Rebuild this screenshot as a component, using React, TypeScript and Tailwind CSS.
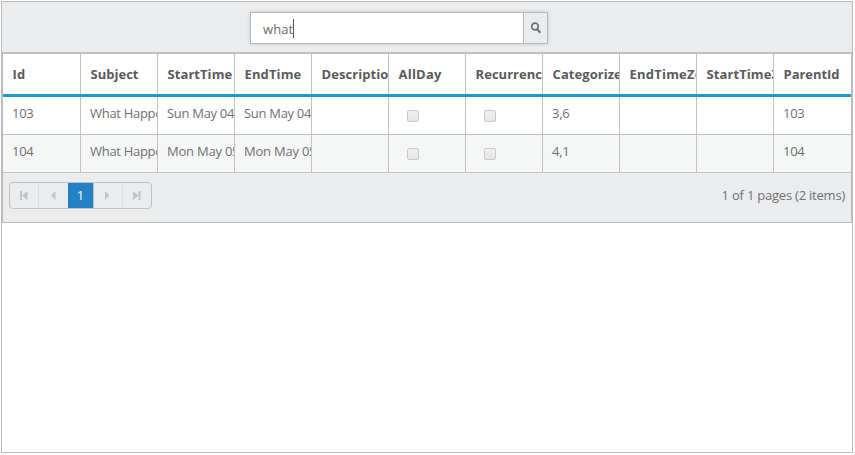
import type { ReactNode } from 'react';

type Row = {
  id: string;
  subject: string;
  start: string;
  end: string;
  categorize: string;
  parentId: string;
  dateTrack: string;
};

const headers = [
  { label: 'Id', track: 'tracking-normal' },
  { label: 'Subject', track: 'tracking-normal' },
  { label: 'StartTime', track: 'tracking-[0.05px]' },
  { label: 'EndTime', track: 'tracking-[0.1px]' },
  { label: 'Description', track: 'tracking-[0.05px]' },
  { label: 'AllDay', track: 'tracking-[0.2px]' },
  { label: 'Recurrence', track: 'tracking-[0.02px]' },
  { label: 'Categorize', track: 'tracking-[0.05px]' },
  { label: 'EndTimeZone', track: 'tracking-[0.2px]' },
  { label: 'StartTimeZone', track: 'tracking-[0.08px]' },
  { label: 'ParentId', track: 'tracking-[-0.05px]' },
];

const rows: Row[] = [
  { id: '103', subject: 'What Happened', start: 'Sun May 04 2014', end: 'Sun May 04 2014', categorize: '3,6', parentId: '103', dateTrack: 'tracking-[-0.3px]' },
  { id: '104', subject: 'What Happened', start: 'Mon May 05 2014', end: 'Mon May 05 2014', categorize: '4,1', parentId: '104', dateTrack: 'tracking-[-0.22px]' },
];

const columns = 'grid grid-cols-[78px_repeat(10,77px)]';

function Check() {
  return (
    <span className="mt-[13px] ml-[9px] block size-3 rounded-[2px] border border-[#c9c9c9] bg-linear-to-b from-[#f0f0f0] to-[#e6e6e6]" />
  );
}

function Cell({ children }: { children?: ReactNode }) {
  return (
    <div className="h-full overflow-hidden border-r border-[#c1c1c1] pl-[9px] whitespace-nowrap last:border-r-0">
      {children}
    </div>
  );
}

function Text({ children, track = 'tracking-[-0.3px]' }: { children: ReactNode; track?: string }) {
  return <span className={`block pt-[6px] text-[13px] leading-5 text-[#707070] ${track}`}>{children}</span>;
}

function DataRow({ row, alt }: { row: Row; alt: boolean }) {
  return (
    <div className={`${columns} h-[38px] border-b border-[#c1c1c1] ${alt ? 'bg-[#f5f7f6]' : 'bg-white'}`}>
      <Cell><Text>{row.id}</Text></Cell>
      <Cell><Text>{row.subject}</Text></Cell>
      <Cell><Text track={row.dateTrack}>{row.start}</Text></Cell>
      <Cell><Text track={row.dateTrack}>{row.end}</Text></Cell>
      <Cell />
      <Cell><Check /></Cell>
      <Cell><Check /></Cell>
      <Cell><Text>{row.categorize}</Text></Cell>
      <Cell />
      <Cell />
      <Cell><Text>{row.parentId}</Text></Cell>
    </div>
  );
}

function Arrow({ d }: { d: string }) {
  return (
    <svg width="8" height="9" viewBox="0 0 8 9" fill="#c3c4c6">
      <path d={d} />
    </svg>
  );
}

export default function App() {
  return (
    <div className="h-[455px] w-[855px] bg-white pt-px pl-px font-['Open_Sans','Noto_Sans',sans-serif]">
      <div className="h-[452px] w-[852px] border border-[#b9bbbb]">
        <div className="flex h-[50px] justify-center bg-[#ebecee] pt-[10px] pr-14">
          <div className="flex h-8 w-[298px] border border-[#b5b7b8] shadow-[0_0_4px_rgba(0,0,0,0.15)]">
            <div className="flex flex-1 items-center bg-white pl-3 text-[13px] text-[#6a6a6a]">
              <span className="pt-[3px] tracking-[0.1px]">what</span>
              <span className="mt-px h-[19px] w-px bg-[#555]" />
            </div>
            <div className="flex w-6 items-center justify-center border-l border-[#b5b7b8] bg-[#ebecee]">
              <svg width="11" height="12" viewBox="0 0 11 12" fill="none" stroke="#6f7072">
                <circle cx="5" cy="4.5" r="3.3" strokeWidth="1.7" />
                <path d="M7 7L10.3 10.8" strokeWidth="2" />
              </svg>
            </div>
          </div>
        </div>
        <div className="h-[171px] border border-[#bcbcbc]">
          <div className="h-px bg-[#c1c1c1]" />
          <div className={`${columns} h-[43px] border-b-[3px] border-[#179bd7] bg-white`}>
            {headers.map((h) => (
              <Cell key={h.label}>
                <span className={`block pt-[10px] pl-[0.6px] text-[13px] leading-5 font-bold text-[#5a5a5a] ${h.track}`}>{h.label}</span>
              </Cell>
            ))}
          </div>
          {rows.map((r, i) => (
            <DataRow key={r.id} row={r} alt={i === 1} />
          ))}
          <div className="flex h-[49px] items-start justify-between bg-[#ebecee] pt-[9px] pr-[6px] pl-[6px]">
            <div className="flex h-[27px] w-[143px] overflow-hidden rounded-[4px] border border-[#c1c1c1]">
              <div className="flex w-[29px] items-center justify-center border-r border-[#dcddde]">
                <Arrow d="M0 0h2v9H0zM7.5 0v9L2 4.5z" />
              </div>
              <div className="flex w-[29px] items-center justify-center">
                <Arrow d="M5.5 0v9L1 4.5z" />
              </div>
              <div className="flex w-[26px] items-center justify-center border-r border-[#c1c1c1] bg-[#2382c6] text-[13px] text-white">1</div>
              <div className="flex w-[29px] items-center justify-center border-r border-[#dcddde]">
                <Arrow d="M1 0v9L5.5 4.5z" />
              </div>
              <div className="flex w-7 items-center justify-center">
                <Arrow d="M0 0v9L5.5 4.5zM5.5 0h2v9h-2z" />
              </div>
            </div>
            <span className="pt-[3px] text-[13px] leading-5 tracking-[-0.22px] text-[#707070]">1 of 1 pages (2 items)</span>
          </div>
        </div>
      </div>
    </div>
  );
}
